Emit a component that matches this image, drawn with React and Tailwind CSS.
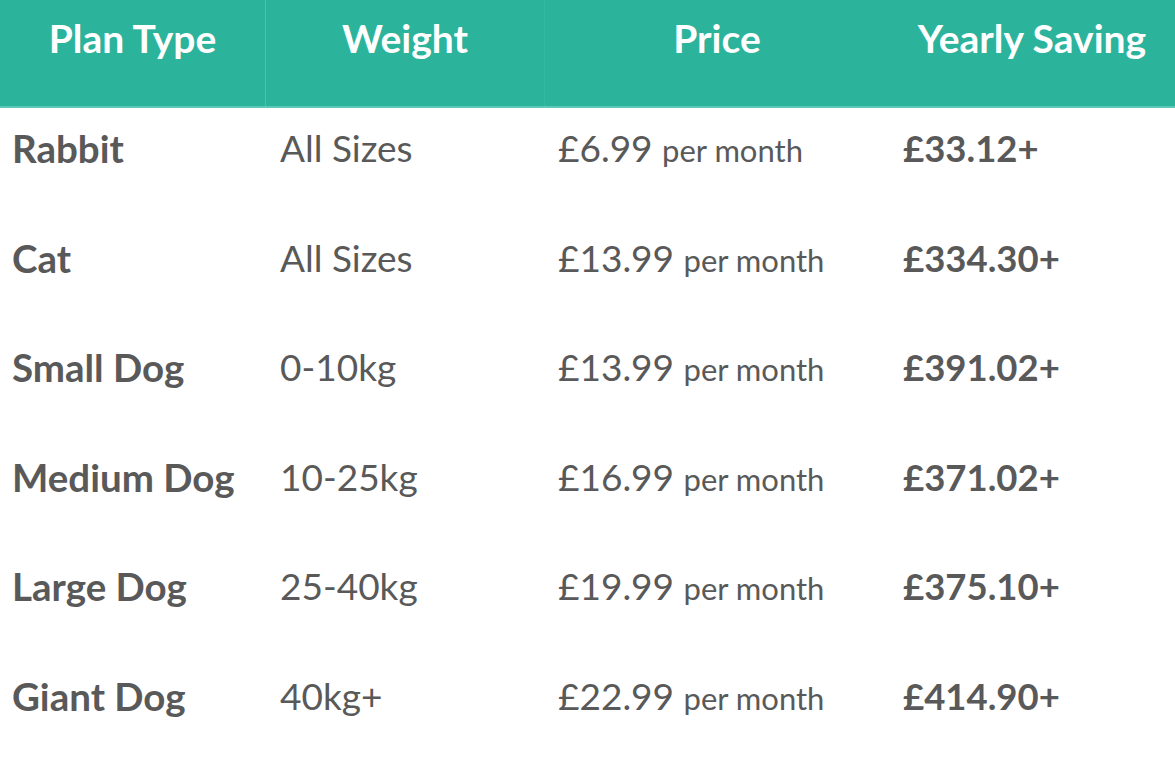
import React from "react";

const rows = [
  ["Rabbit", "All Sizes", "£6.99", "£33.12+"],
  ["Cat", "All Sizes", "£13.99", "£334.30+"],
  ["Small Dog", "0-10kg", "£13.99", "£391.02+"],
  ["Medium Dog", "10-25kg", "£16.99", "£371.02+"],
  ["Large Dog", "25-40kg", "£19.99", "£375.10+"],
  ["Giant Dog", "40kg+", "£22.99", "£414.90+"],
];

export default function App() {
  return (
    <div
      className="w-[1175px] h-[767px] bg-white overflow-hidden"
      style={{ fontFamily: "Lato, 'Open Sans', sans-serif" }}
    >
      <div className="grid grid-cols-[266px_279px_344px_286px] h-[108px] bg-[#2bb39c] border-b-2 border-[#5ccab6] text-white font-bold text-[39px] leading-[52px]">
        <div className="flex justify-center pt-[12px] border-r border-[#4dc2ad]">Plan Type</div>
        <div className="flex justify-center pt-[12px] border-r border-[#36b9a2]">Weight</div>
        <div className="flex justify-center pt-[12px]">Price</div>
        <div className="flex justify-center pt-[12px]">Yearly Saving</div>
      </div>
      <div className="text-[#595959]">
        {rows.map((r) => (
          <div
            key={r[0]}
            className="grid grid-cols-[266px_279px_344px_286px] h-[109.5px] items-start pt-[14px] text-[37px] leading-[52px]"
          >
            <div className="pl-[12px] font-bold text-[38.5px] whitespace-nowrap">{r[0]}</div>
            <div className="pl-[14px]">{r[1]}</div>
            <div className="pl-[13px] whitespace-nowrap">
              {r[2]} <span className="text-[31px]">per month</span>
            </div>
            <div className="pl-[14px] font-bold text-[36.5px]">{r[3]}</div>
          </div>
        ))}
      </div>
    </div>
  );
}
